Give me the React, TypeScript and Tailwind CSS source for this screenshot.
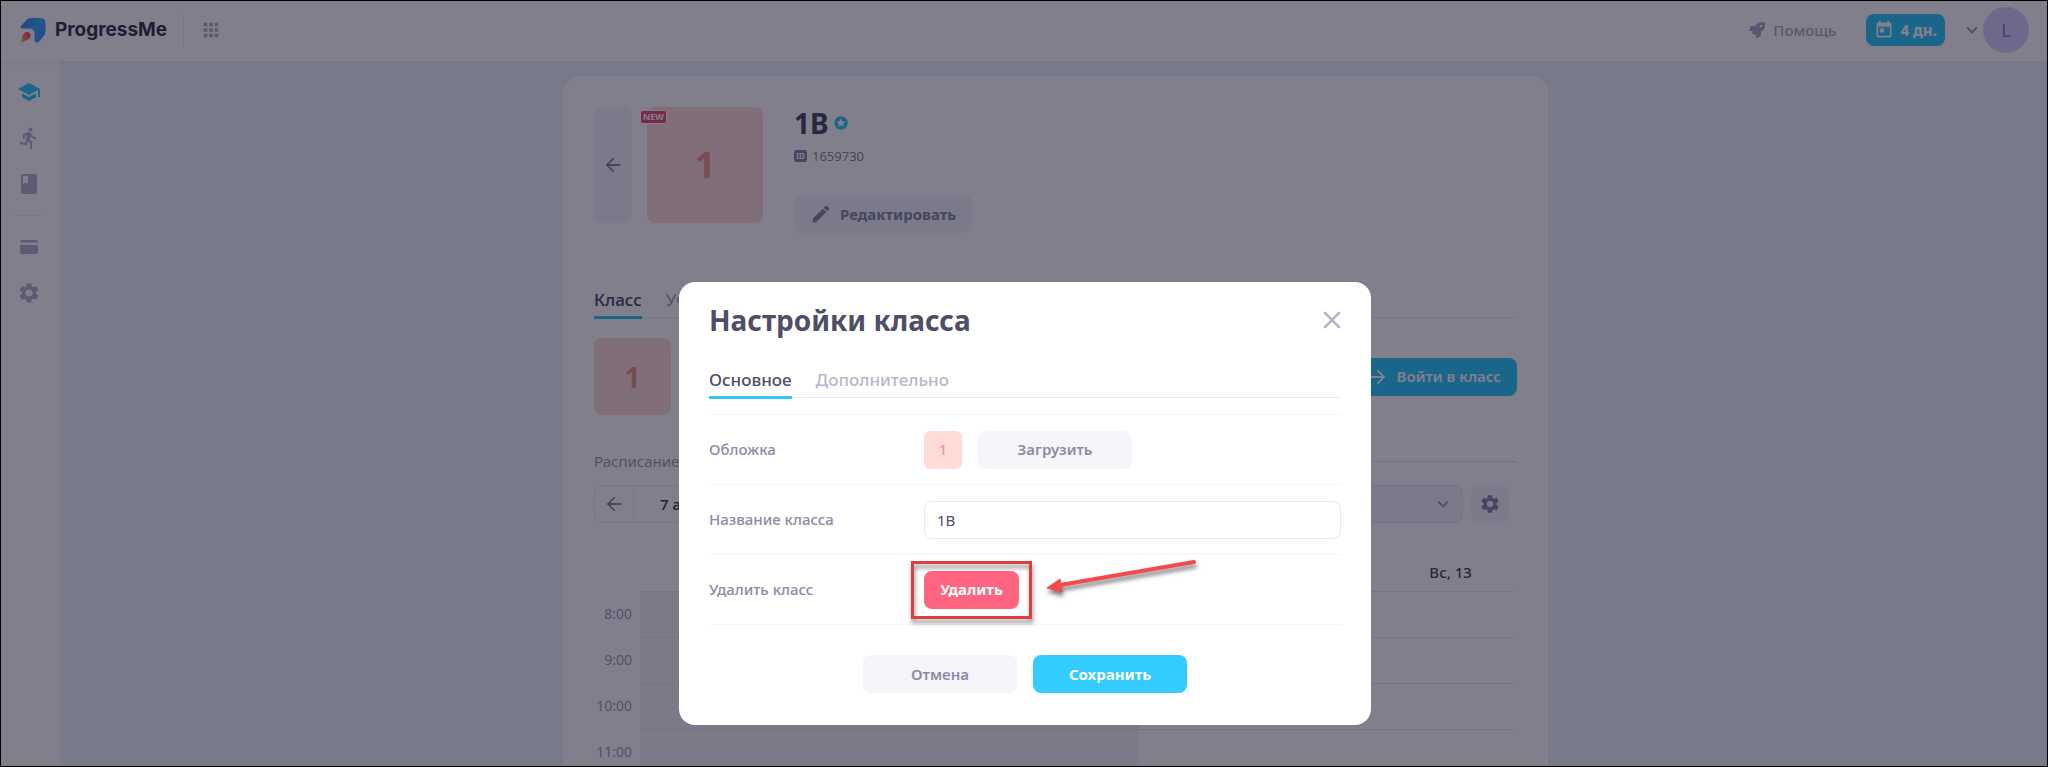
import { useState } from 'react';
import {
  MdApps,
  MdArrowBack,
  MdArrowForward,
  MdBook,
  MdClose,
  MdDirectionsRun,
  MdEdit,
  MdKeyboardArrowDown,
  MdSchool,
  MdSettings,
  MdStars,
  MdToday,
} from 'react-icons/md';
import { FaRocket } from 'react-icons/fa';

const HOURS = ['8:00', '9:00', '10:00', '11:00'];
const DAYS = ['Пн, 7', 'Вт, 8', 'Ср, 9', 'Чт, 10', 'Пт, 11', 'Сб, 12', 'Вс, 13'];
const PAST_DAYS = 4;

function Logo() {
  return (
    <svg width="26" height="26" viewBox="0 0 26 26" aria-hidden="true">
      <defs>
        <linearGradient id="logo-body" x1="0" y1="0.3" x2="1" y2="0.8">
          <stop offset="0" stopColor="#4a88ff" />
          <stop offset="0.5" stopColor="#3ab4f8" />
          <stop offset="1" stopColor="#4a8cff" />
        </linearGradient>
        <linearGradient id="logo-flame" x1="1" y1="0" x2="0" y2="1">
          <stop offset="0.2" stopColor="#f8506a" />
          <stop offset="0.9" stopColor="#ffb838" />
        </linearGradient>
      </defs>
      <path
        d="M1 9 6.500 3Q8.500 1 11.500 1H20Q25.500 1 25.500 6V14.500Q25.500 17.500 23.500 19.500L18.500 25Q17 26 15.500 25Q14.500 24 14.500 22.500V17Q14.500 11.500 9 11.500H2.500Q-.5 11 1 9Z"
        fill="url(#logo-body)"
      />
      <path
        d="M1 24.500 3 17.500Q4.500 14.500 7.500 15Q11 16 10.500 19.500Q10 21.500 8 22.500L2 25.500Q1 25.800 1 24.500Z"
        fill="url(#logo-flame)"
      />
    </svg>
  );
}

function CardIcon() {
  return (
    <svg width="24" height="24" viewBox="0 0 24 24" fill="currentColor" aria-hidden="true">
      <path d="M3 7.500V7q0-2 2-2H19q2 0 2 2V7.500ZM3 10H21V17q0 2-2 2H5q-2 0-2-2Z" />
    </svg>
  );
}

function Header() {
  return (
    <header className="relative flex h-[60px] shrink-0 items-center bg-white pb-[2px] pl-[19px] pr-[18px] shadow-[0_1px_6px_rgba(80,80,140,0.1)]">
      <a href="#" className="flex items-center gap-[9px] border-r border-[#e9e8f2] py-[2px] pr-4">
        <Logo />
        <span className="font-['Inter'] text-[19px] font-bold leading-7 text-[#3c3a55]">
          ProgressMe
        </span>
      </a>
      <button aria-label="Приложения" className="ml-4 text-[#b5b3cc]">
        <MdApps size={22} />
      </button>
      <div className="ml-auto flex items-center">
        <a href="#" className="flex items-center gap-2 text-[15px] font-medium text-[#b0aec8]">
          <FaRocket size={16} />
          Помощь
        </a>
        <button className="ml-[30px] flex h-8 items-center gap-[6px] rounded-lg bg-[#33ccff] px-2 text-[15px] font-extrabold text-white">
          <MdToday size={20} />4 дн.
        </button>
        <button aria-label="Профиль" className="ml-4 flex items-center text-[#9f9dba]">
          <MdKeyboardArrowDown size={22} />
          <span className="flex size-[46px] items-center justify-center rounded-full bg-[#d9d3ff] text-lg text-[#8479d0]">
            L
          </span>
        </button>
      </div>
    </header>
  );
}

function Sidebar() {
  return (
    <nav className="flex w-[59px] shrink-0 flex-col items-center gap-[22px] bg-white pr-[4px] pt-[19px] text-[#b8b6d0]">
      <a href="#" aria-label="Классы" className="text-[#33ccff]">
        <MdSchool size={24} />
      </a>
      <a href="#" aria-label="Марафоны">
        <MdDirectionsRun size={24} />
      </a>
      <a href="#" aria-label="Материалы">
        <MdBook size={24} />
      </a>
      <hr className="-my-[3px] w-8 border-[#f4f3f9]" />
      <a href="#" aria-label="Оплата">
        <CardIcon />
      </a>
      <a href="#" aria-label="Настройки">
        <MdSettings size={24} />
      </a>
    </nav>
  );
}

function ClassHero() {
  return (
    <div className="flex">
      <button
        aria-label="Назад"
        className="flex h-[116px] w-[38px] items-center justify-center rounded-lg bg-[#f5f5fc] text-[#8c8aa7]"
      >
        <MdArrowBack size={22} />
      </button>
      <div className="relative ml-[15px] flex size-[116px] items-center justify-center rounded-lg bg-[#ffdcd8] text-4xl font-bold text-[#f0978c]">
        1
        <span className="absolute -left-[7px] top-[3px] rounded-[3px] border border-white bg-[#f0507a] px-[2px] text-[9px] font-bold leading-[12px] text-white">
          NEW
        </span>
      </div>
      <div className="ml-[31px] flex flex-col items-start">
        <h1 className="flex items-center gap-1 text-[28px] font-bold leading-8 text-[#504d66]">
          1B
          <MdStars size={16} className="text-[#33ccff]" />
        </h1>
        <p className="mt-1 flex items-center gap-[5px] text-[13px] leading-[26px] text-[#8c8aa7]">
          <span className="rounded-[3px] bg-[#8c8aa7] px-[2px] text-[8px] font-bold leading-[12px] text-white">
            ID
          </span>
          1659730
        </p>
        <button className="mt-[26px] flex h-[38px] items-center gap-2 rounded-lg bg-[#f5f5fc] px-4 text-[15px] font-bold text-[#8c8aa7]">
          <MdEdit size={22} />
          Редактировать
        </button>
      </div>
    </div>
  );
}

function Schedule() {
  return (
    <section>
      <div className="flex items-center gap-3 text-[15px] leading-6 text-[#a5a3c0]">
        Расписание
        <div className="flex-1 border-t border-dotted border-[#c6c4d8]" />
      </div>
      <div className="mt-3 flex h-[38px] pr-2">
        <div className="flex items-center rounded-lg border border-[#eeedf5]">
          <button
            aria-label="Предыдущая неделя"
            className="flex h-full w-[39px] items-center justify-center border-r border-[#eeedf5] text-[#8c8aa7]"
          >
            <MdArrowBack size={22} />
          </button>
          <span className="px-[26px] text-[15px] font-medium text-[#3c3a55]">7 апр</span>
        </div>
        <button
          aria-label="Выбрать ученика"
          className="ml-auto flex w-60 items-center justify-end rounded-lg border border-[#e6e8f4] bg-[#f2f5ff] pr-2 text-[#a5a3c0]"
        >
          <MdKeyboardArrowDown size={22} />
        </button>
        <button
          aria-label="Настройки расписания"
          className="ml-2 flex w-[38px] items-center justify-center rounded-lg bg-[#f5f5fc] text-[#8c8aa7]"
        >
          <MdSettings size={22} />
        </button>
      </div>
      <table className="mt-[38px] w-full table-fixed border-collapse">
        <thead>
          <tr className="h-[30px]">
            <th className="w-[46px]" />
            {DAYS.map((day) => (
              <th key={day} className="align-top text-[15px] font-medium text-[#504d66]">
                {day}
              </th>
            ))}
            <th className="w-1" />
          </tr>
        </thead>
        <tbody>
          {HOURS.map((hour) => (
            <tr key={hour} className="h-[46px]">
              <th className="pr-2 text-right text-sm font-normal text-[#a5a3c0]">{hour}</th>
              {DAYS.map((day, i) => (
                <td
                  key={day}
                  className={
                    i < PAST_DAYS
                      ? 'border-y border-[#e9e8f2] bg-[#f5f4fa]'
                      : 'border-y border-[#e9e8f2]'
                  }
                />
              ))}
              <td />
            </tr>
          ))}
        </tbody>
      </table>
    </section>
  );
}

function DeleteHighlight() {
  return (
    <>
      <div className="pointer-events-none absolute -inset-x-[13px] -inset-y-[10px] border-[3px] border-[#dc3f42] drop-shadow-[1px_4px_2px_rgba(0,0,0,0.45)]" />
      <svg
        className="pointer-events-none absolute -top-4 left-full ml-[25px] drop-shadow-[1px_4px_2px_rgba(0,0,0,0.5)]"
        width="156"
        height="44"
        viewBox="0 0 156 44"
        aria-hidden="true"
      >
        <path d="M16 30 150 7" stroke="#f44a4c" strokeWidth="4" strokeLinecap="round" />
        <path d="M3 33 16 24 18 37Z" fill="#f44a4c" stroke="#f44a4c" strokeLinejoin="round" />
      </svg>
    </>
  );
}

function SettingsDialog() {
  const [name, setName] = useState('1B');

  return (
    <div
      role="dialog"
      aria-labelledby="dialog-title"
      className="w-[692px] rounded-2xl bg-white px-[30px] pb-8 pt-[18px]"
    >
      <div className="flex items-center justify-between">
        <h2 id="dialog-title" className="text-[28px] font-bold leading-10 text-[#504d66]">
          Настройки класса
        </h2>
        <button aria-label="Закрыть" className="-mr-[6px] text-[#b5b3ca]">
          <MdClose size={30} />
        </button>
      </div>

      <div className="mt-6 flex gap-6 border-b border-[#e9e8f2] text-[17px] font-medium leading-8">
        <button className="-mb-[2px] border-b-[3px] border-[#33c5f5] text-[#504d66]">Основное</button>
        <button className="-mb-[2px] border-b-[3px] border-transparent text-[#b8b6cc]">Дополнительно</button>
      </div>

      <div className="mt-4 border-b border-[#f5f5f8] text-[15px] font-medium text-[#8c8aa7]">
        <div className="flex h-[70px] items-center border-t border-[#f5f5f8]">
          <span className="w-[215px]">Обложка</span>
          <span className="flex size-[38px] items-center justify-center rounded-md bg-[#ffdcd8] text-[#f0978c]">
            1
          </span>
          <button className="ml-4 h-[38px] w-[154px] rounded-lg bg-[#f5f5fa] font-semibold">
            Загрузить
          </button>
        </div>
        <div className="flex h-[70px] items-center border-t border-[#f5f5f8]">
          <label htmlFor="class-name" className="w-[215px]">
            Название класса
          </label>
          <input
            id="class-name"
            value={name}
            onChange={(e) => setName(e.target.value)}
            className="h-[38px] flex-1 rounded-lg border border-[#e9e9ee] px-3 font-normal text-[#504d66] outline-none"
          />
        </div>
        <div className="flex h-[70px] items-center border-t border-[#f5f5f8]">
          <span className="w-[215px]">Удалить класс</span>
          <div className="relative">
            <button className="h-[38px] w-[95px] rounded-lg bg-[#ff6480] font-bold text-white">
              Удалить
            </button>
            <DeleteHighlight />
          </div>
        </div>
      </div>

      <div className="mt-[30px] flex justify-center gap-4 text-[15px]">
        <button className="h-[38px] w-[154px] rounded-lg bg-[#f5f5fa] font-semibold text-[#8c8aa7]">
          Отмена
        </button>
        <button className="h-[38px] w-[154px] rounded-lg bg-[#33ccff] font-bold text-white">
          Сохранить
        </button>
      </div>
    </div>
  );
}

export default function App() {
  return (
    <div className="relative flex h-screen flex-col overflow-hidden border border-black bg-[#f2f6fd] font-['Noto_Sans',sans-serif]">
      <Header />
      <div className="flex min-h-0 flex-1">
        <Sidebar />
        <main className="flex flex-1 justify-center overflow-hidden pl-1 pt-[15px]">
          <div className="h-fit w-[985px] rounded-t-2xl bg-white px-[31px] pt-[31px] shadow-[0_0_8px_rgba(80,80,140,0.1)]">
            <ClassHero />
            <div className="mt-[51px] flex gap-6 border-b border-[#e9e8f2] text-[17px] font-medium leading-8">
              <button className="-mb-[2px] border-b-[3px] border-[#33ccff] text-[#504d66]">Класс</button>
              <button className="-mb-[2px] border-b-[3px] border-transparent text-[#b0aec8]">Ученики</button>
            </div>
            <div className="mb-[34px] mt-5 flex items-center justify-between">
              <div className="flex size-[77px] items-center justify-center rounded-lg bg-[#ffdcd8] text-[28px] font-bold text-[#f0978c]">
                1
              </div>
              <button className="flex h-[38px] items-center gap-2 rounded-lg bg-[#33ccff] px-4 text-[15px] font-semibold text-white">
                <MdArrowForward size={22} />
                Войти в класс
              </button>
            </div>
            <Schedule />
          </div>
        </main>
      </div>

      {/* Modal backdrop */}
      <div className="absolute inset-0 flex items-start justify-center bg-[#010018]/50 pl-[2px] pt-[281px]">
        <SettingsDialog />
      </div>
    </div>
  );
}
